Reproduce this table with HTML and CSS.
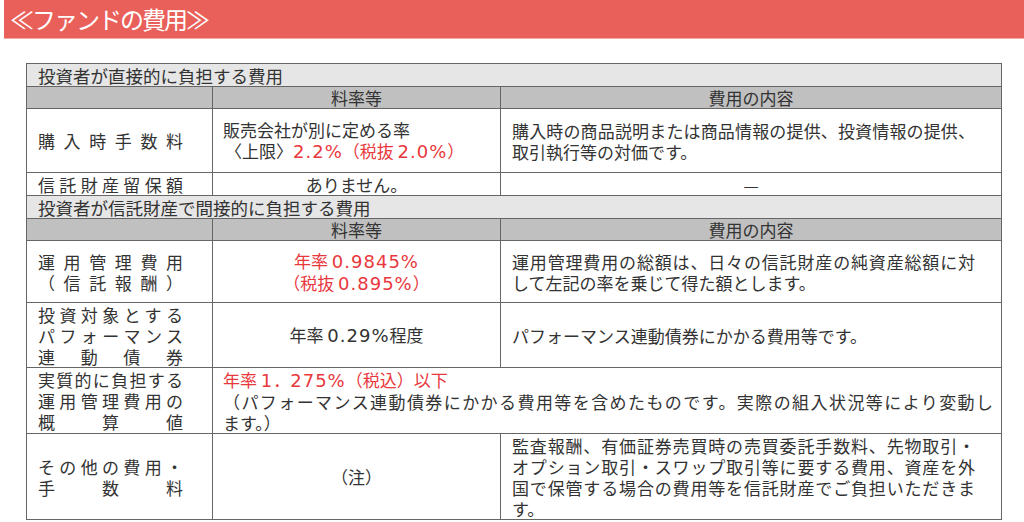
FILE: index.html
```html
<!DOCTYPE html>
<html lang="ja">
<head>
<meta charset="utf-8">
<link rel="stylesheet" href="styles.css">
</head>
<body>
<div class="titlebar"><span class="title">≪ファンドの費用≫</span></div>
<table class="fees">
  <colgroup><col class="c1"><col class="c2"><col class="c3"></colgroup>
  <tr class="sec"><td colspan="3">投資者が直接的に負担する費用</td></tr>
  <tr class="hd"><td></td><td>料率等</td><td>費用の内容</td></tr>
  <tr class="r3">
    <td class="lbl"><div class="jl">購入時手数料</div></td>
    <td class="rate"><div>販売会社が別に定める率</div><div class="ind">〈上限〉<span class="red"><span class="num">2.2%</span>（税抜 <span class="num">2.0%</span>）</span></div></td>
    <td class="desc"><div class="full">購入時の商品説明または商品情報の提供、投資情報の提供、</div><div>取引執行等の対価です。</div></td>
  </tr>
  <tr class="r4">
    <td class="lbl"><div class="jl">信託財産留保額</div></td>
    <td class="center">ありません。</td>
    <td class="center">—</td>
  </tr>
  <tr class="sec"><td colspan="3">投資者が信託財産で間接的に負担する費用</td></tr>
  <tr class="hd"><td></td><td>料率等</td><td>費用の内容</td></tr>
  <tr class="r7">
    <td class="lbl"><div class="jl">運用管理費用</div><div class="jl">（信託報酬）</div></td>
    <td class="center red"><div>年率 <span class="num">0.9845%</span></div><div>（税抜 <span class="num">0.895%</span>）</div></td>
    <td class="desc"><div class="full">運用管理費用の総額は、日々の信託財産の純資産総額に対</div><div>して左記の率を乗じて得た額とします。</div></td>
  </tr>
  <tr class="r8">
    <td class="lbl"><div class="jl">投資対象とする</div><div class="jl">パフォーマンス</div><div class="jl">連動債券</div></td>
    <td class="center">年率 <span class="num">0.29%</span>程度</td>
    <td class="desc"><div>パフォーマンス連動債券にかかる費用等です。</div></td>
  </tr>
  <tr class="r9">
    <td class="lbl"><div class="jl">実質的に負担する</div><div class="jl">運用管理費用の</div><div class="jl">概算値</div></td>
    <td class="merged" colspan="2"><div class="red">年率 <span class="num">1</span>．<span class="num">275%</span>（税込）以下</div><div class="full">（パフォーマンス連動債券にかかる費用等を含めたものです。実際の組入状況等により変動し</div><div>ます。）</div></td>
  </tr>
  <tr class="r10">
    <td class="lbl"><div class="jl">その他の費用・</div><div class="jl">手数料</div></td>
    <td class="center">（注）</td>
    <td class="desc"><div class="full">監査報酬、有価証券売買時の売買委託手数料、先物取引・</div><div class="full">オプション取引・スワップ取引等に要する費用、資産を外</div><div class="full">国で保管する場合の費用等を信託財産でご負担いただきま</div><div>す。</div></td>
  </tr>
</table>
</body>
</html>
```
FILE: styles.css
```css
html, body {
  margin: 0;
  padding: 0;
  background: #ffffff;
}
body {
  font-family: "Noto Sans CJK JP", "Noto Sans", sans-serif;
  color: #333333;
}
.titlebar {
  margin-left: 4px;
  height: 38px;
  background: #e9605a;
  border-bottom: 1px solid #f2aaa4;
  display: flex;
  align-items: center;
  padding-left: 6px;
}
.title {
  color: #ffffff;
  font-size: 24px;
  line-height: 28px;
  letter-spacing: -2px;
}
.fees {
  margin: 24px 0 0 26px;
  border-collapse: collapse;
  table-layout: fixed;
  width: 975px;
  font-size: 17px;
  line-height: 21px;
  border: 1.5px solid #555555;
}
.c1 { width: 186px; }
.c2 { width: 288px; }
.c3 { width: 501px; }
.fees td {
  border: 1px solid #666666;
  padding: 0;
  vertical-align: middle;
}
.sec td {
  background: #e6e6e6;
  height: 22px;
  padding-left: 11px;
  font-size: 17.5px;
}
.hd td {
  background: #c0c0c0;
  height: 21px;
  text-align: center;
  font-size: 17px;
}
.lbl {
  padding: 0 29px 0 11px !important;
}
.jl {
  text-align: justify;
  text-align-last: justify;
  text-justify: inter-character;
  white-space: nowrap;
}
.rate {
  padding-left: 10px !important;
}
.ind {
  padding-left: 2px;
}
.center {
  text-align: center;
}
.red {
  color: #e8383d;
}
.num {
  font-family: "DejaVu Sans", sans-serif;
  font-size: 18px;
  letter-spacing: 1px;
}
.desc {
  padding: 0 26px 0 11px !important;
}
.full {
  text-align: justify;
  text-align-last: justify;
  white-space: nowrap;
}
.merged {
  padding: 0 8px 0 10px !important;
}
.r3 td { height: 63px; }
.r4 td { height: 22px; }
.r7 td { height: 61px; }
.r8 td { height: 64px; }
.r9 td { height: 65px; }
.r10 td { height: 85px; }
```
